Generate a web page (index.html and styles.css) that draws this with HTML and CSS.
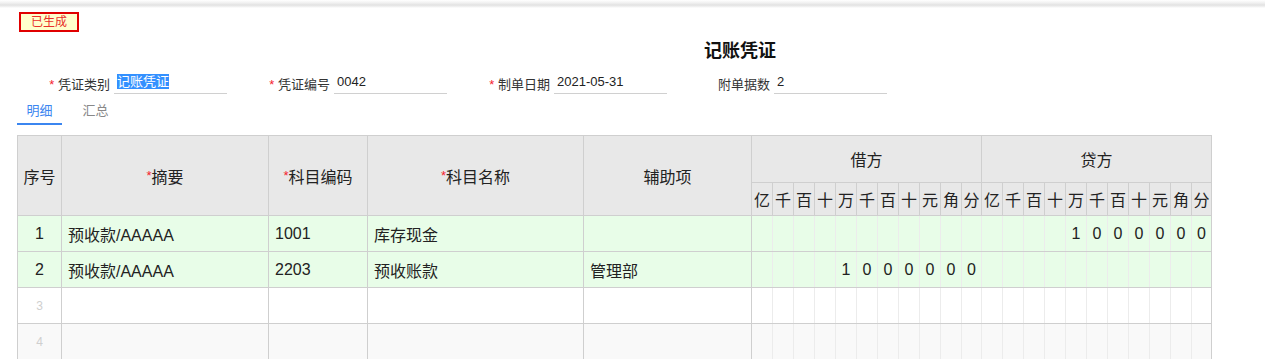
FILE: index.html
```html
<!DOCTYPE html>
<html lang="zh-CN">

<head>
  <meta charset="UTF-8" />
  <title>记账凭证</title>
  <link rel="stylesheet" href="styles.css">
</head>

<body>
  <div class="top-shadow"></div>

  <div class="status-row">
    <span class="status-badge">已生成</span>
  </div>

  <h1 class="voucher-title">记账凭证</h1>

  <!-- Voucher header fields -->
  <div class="form-row">
    <div class="field">
      <label class="field-label"><span class="req">*</span> 凭证类别</label>
      <div class="field-input"><span class="selected">记账凭证</span></div>
    </div>
    <div class="field">
      <label class="field-label"><span class="req">*</span> 凭证编号</label>
      <div class="field-input">0042</div>
    </div>
    <div class="field">
      <label class="field-label"><span class="req">*</span> 制单日期</label>
      <div class="field-input">2021-05-31</div>
    </div>
    <div class="field">
      <label class="field-label">附单据数</label>
      <div class="field-input">2</div>
    </div>
  </div>

  <div class="tabs">
    <div class="tab active">明细</div>
    <div class="tab">汇总</div>
  </div>

  <!-- Entries -->
  <table class="voucher-table">
    <colgroup>
      <col class="c-no">
      <col class="c-summary">
      <col class="c-code">
      <col class="c-name">
      <col class="c-aux">
      <col class="c-d"><col class="c-d"><col class="c-d"><col class="c-d"><col class="c-d"><col class="c-d">
      <col class="c-d"><col class="c-d"><col class="c-d"><col class="c-d"><col class="c-d-last">
      <col class="c-d"><col class="c-d"><col class="c-d"><col class="c-d"><col class="c-d"><col class="c-d">
      <col class="c-d"><col class="c-d"><col class="c-d"><col class="c-d"><col class="c-d-last">
    </colgroup>
    <thead>
      <tr class="head-top">
        <th rowspan="2">序号</th>
        <th rowspan="2"><span class="req-h">*</span>摘要</th>
        <th rowspan="2"><span class="req-h">*</span>科目编码</th>
        <th rowspan="2"><span class="req-h">*</span>科目名称</th>
        <th rowspan="2">辅助项</th>
        <th colspan="11">借方</th>
        <th colspan="11">贷方</th>
      </tr>
      <tr class="head-digits" id="digitHead"></tr>
    </thead>
    <tbody id="rows"></tbody>
  </table>

  <script>
    const units = ['亿', '千', '百', '十', '万', '千', '百', '十', '元', '角', '分'];
    const entries = [
      { summary: '预收款/AAAAA', code: '1001', name: '库存现金', aux: '', debit: '', credit: '1000000' },
      { summary: '预收款/AAAAA', code: '2203', name: '预收账款', aux: '管理部', debit: '1000000', credit: '' },
      null,
      null,
      null
    ];

    // blue line left of 十(万) and 百, red line left of 角
    function lineClass(i) {
      if (i === 3 || i === 6) return ' blue';
      if (i === 9) return ' red';
      return '';
    }

    function digitCells(amount) {
      const padded = amount ? amount.padStart(11, ' ') : '           ';
      let html = '';
      for (let i = 0; i < 11; i++) {
        const cls = 'd' + lineClass(i) + (i === 0 ? ' group-start' : '');
        html += '<td class="' + cls + '">' + padded[i].trim() + '</td>';
      }
      return html;
    }

    let head = '';
    for (let g = 0; g < 2; g++) {
      units.forEach((u, i) => {
        head += '<th class="d' + lineClass(i) + (i === 0 ? ' group-start' : '') + '">' + u + '</th>';
      });
    }
    document.getElementById('digitHead').innerHTML = head;

    let body = '';
    entries.forEach((e, idx) => {
      if (e) {
        body += '<tr class="filled"><td class="no">' + (idx + 1) + '</td>' +
          '<td class="txt">' + e.summary + '</td>' +
          '<td class="txt">' + e.code + '</td>' +
          '<td class="txt">' + e.name + '</td>' +
          '<td class="txt">' + e.aux + '</td>' +
          digitCells(e.debit) + digitCells(e.credit) + '</tr>';
      } else {
        body += '<tr class="empty"><td class="no muted">' + (idx + 1) + '</td>' +
          '<td></td><td></td><td></td><td></td>' +
          digitCells('') + digitCells('') + '</tr>';
      }
    });
    document.getElementById('rows').innerHTML = body;
  </script>
</body>

</html>
```

FILE: styles.css
```css
* {
  box-sizing: border-box;
  margin: 0;
  padding: 0;
}

html,
body {
  font-family: 'Liberation Sans', 'Noto Sans CJK SC', sans-serif;
  background-color: #fff;
  color: #333;
}

.top-shadow {
  height: 8px;
  background: linear-gradient(to bottom, #fff 0, #f0f0f0 3px, #e2e2e2 5px, #f4f4f4 7px, #fff 8px);
}

.status-row {
  padding-left: 19px;
  padding-top: 4px;
  height: 24px;
}

.status-badge {
  display: inline-block;
  width: 60px;
  height: 20px;
  line-height: 16px;
  border: 2px solid #e00000;
  background-color: #ffffcc;
  color: #e8302a;
  font-size: 12px;
  text-align: center;
}

.voucher-title {
  font-size: 18px;
  font-weight: bold;
  color: #111;
  line-height: 24px;
  margin-top: 7px;
  text-align: center;
  padding-left: 215px;
}

.form-row {
  display: flex;
  padding-left: 36px;
  margin-top: 9px;
}

.field {
  width: 220px;
  display: flex;
  align-items: center;
  gap: 4px;
}

.field-label {
  width: 74px;
  text-align: right;
  font-size: 13px;
  color: #333;
}

.req {
  color: #f5222d;
}

.field-input {
  width: 113px;
  height: 22px;
  line-height: 20px;
  font-size: 13px;
  color: #222;
  padding-left: 3px;
  border-bottom: 1px solid #d0d0d0;
}

.selected {
  background-color: #3390ff;
  color: #fff;
}

.tabs {
  display: flex;
  gap: 11px;
  margin-left: 17px;
  height: 31px;
}

.tab {
  width: 45px;
  padding-top: 8px;
  text-align: center;
  font-size: 13px;
  line-height: 18px;
  color: #888;
}

.tab.active {
  color: #3b86f0;
  border-bottom: 2px solid #3b86f0;
}

.voucher-table {
  margin-top: 10px;
  margin-left: 17px;
  width: 1195px;
  table-layout: fixed;
  border-collapse: collapse;
  font-size: 16px;
  color: #222;
}

.c-no { width: 44px; }
.c-summary { width: 207px; }
.c-code { width: 99px; }
.c-name { width: 216px; }
.c-aux { width: 168px; }
.c-d { width: 21px; }
.c-d-last { width: 20px; }

.voucher-table th,
.voucher-table td {
  border: 1px solid #cfcfcf;
  padding: 0;
  overflow: hidden;
  white-space: nowrap;
}

.voucher-table th {
  background-color: #e8e8e8;
  font-weight: normal;
  color: #222;
}

.head-top {
  height: 47px;
}

.head-digits {
  height: 33px;
}

.req-h {
  color: #f5222d;
  font-size: 13px;
  vertical-align: 3px;
}

.voucher-table tbody tr {
  height: 36px;
}

.voucher-table tr.filled td {
  background-color: #e8fde8;
}

.voucher-table tbody tr:nth-child(even).empty td {
  background-color: #f9f9f9;
}

.voucher-table td.no {
  text-align: center;
}

.voucher-table td.muted {
  color: #cfcfcf;
  font-size: 12px;
}

.voucher-table td.txt {
  padding-left: 6px;
}

.voucher-table td.d {
  text-align: center;
  border-left-color: #ececec;
  border-right-color: #ececec;
}

.voucher-table td.d.blue {
  border-left-color: #cfe6f6;
}

.voucher-table td.d.red {
  border-left-color: #f6d6d6;
}

.voucher-table th.d.blue {
  border-left-color: #cde4f4;
}

.voucher-table th.d.red {
  border-left-color: #f2d2d2;
}

.voucher-table .group-start {
  border-left-color: #cfcfcf !important;
}

.voucher-table td.d:last-child {
  border-right-color: #cfcfcf;
}
```
